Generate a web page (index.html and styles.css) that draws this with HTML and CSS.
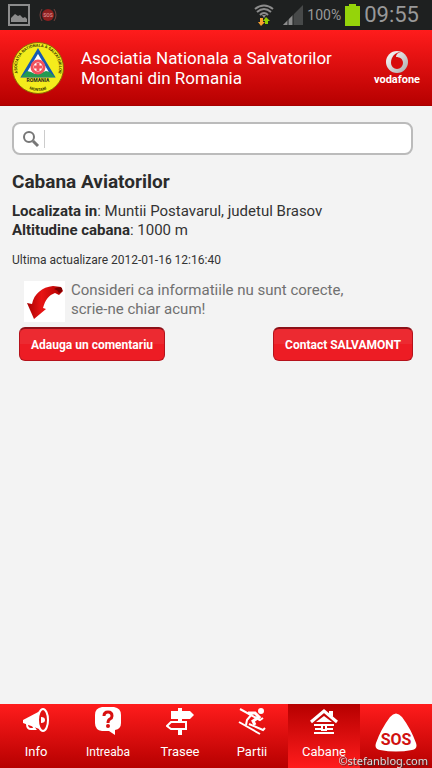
FILE: index.html
```html
<!DOCTYPE html>
<html lang="ro">
<head>
    <meta charset="UTF-8">
    <meta name="viewport" content="width=device-width, initial-scale=1.0">
    <title>Cabana Aviatorilor</title>
    <link rel="stylesheet" href="styles.css">
</head>
<body>
    <div class="status-bar">
        <svg class="status-picture" width="22" height="22" viewBox="0 0 22 22">
            <rect x="1" y="1" width="20" height="20" fill="none" stroke="#8c8c8c" stroke-width="2"/>
            <path d="M3 18v-4l4-4 3 2 2-1 3 3 2-1 2 2v3z" fill="#8c8c8c"/>
        </svg>
        <svg class="status-sos" width="18" height="16" viewBox="0 0 18 16">
            <circle cx="9" cy="8" r="6" fill="#8e1f1f"/>
            <path d="M3 2Q-1 8 3 14M15 2q4 6 0 12" fill="none" stroke="#70403c"/>
            <text x="9" y="10" text-anchor="middle" font-size="5" font-weight="700" fill="#d08080">SOS</text>
        </svg>
        <div class="status-right">
            <svg width="22" height="22" viewBox="0 0 22 22">
                <g fill="none" stroke="#8c8c8c" stroke-width="2">
                    <path d="M2 5q9-7 18 0M4 8q7-6 14 0M7 11q4-4 8 0"/>
                </g>
                <path d="M9 11h4l-2 3z" fill="#8c8c8c"/>
                <path d="M7 14h3v4h2l-4 4-3-4h2z" fill="#f9a02c"/>
                <path d="M12 20v-3h-2l3-4 4 4h-2v3z" fill="#8ed000"/>
            </svg>
            <svg width="20" height="20" viewBox="0 0 20 20">
                <path d="M20 0v20H0z" fill="#474949"/>
                <path d="M10 10v10H0z" fill="#8c8c8c"/>
                <path d="M5 14v6M10 8v12" stroke="#1e2020"/>
            </svg>
            <span class="percent">100%</span>
            <svg width="15" height="22" viewBox="0 0 15 22">
                <path d="M4 0h7v2h4v20H0V2h4z" fill="#95d40a"/>
            </svg>
            <span class="clock">09:55</span>
        </div>
    </div>

    <header class="header">
        <svg class="logo" viewBox="0 0 52 52">
            <defs>
                <path id="ring-top" d="M9 38A21 21 0 1 1 43 38"/>
                <path id="ring-bottom" d="M12 44Q26 54 40 44"/>
            </defs>
            <circle cx="26" cy="26" r="25.500" fill="#f4ec1c" stroke="#8c6a00"/>
            <text font-size="4" font-weight="700" fill="#3a3700"><textPath href="#ring-top" startOffset="50%" text-anchor="middle">ASOCIATIA NATIONALA A SALVATORILOR</textPath></text>
            <path d="M26 9L41 34H11z" fill="#fff" stroke="#1559b4" stroke-width="3"/>
            <path d="M9 35l6-6 4 1 4 2 6-1 5-2 4 1 5 5z" fill="#239a52"/>
            <circle cx="26" cy="25" r="6" fill="#fff" stroke="#f0525c" stroke-width="3"/>
            <path d="M26 21v8M22 25h8" stroke="#f0525c" stroke-width="3"/>
            <text x="26" y="40" text-anchor="middle" font-size="5" font-weight="700" fill="#222">ROMANIA</text>
            <text font-size="4" font-weight="700" fill="#3a3700"><textPath href="#ring-bottom" startOffset="50%" text-anchor="middle">MONTANI</textPath></text>
        </svg>
        <h1 class="title">Asociatia Nationala a Salvatorilor Montani din Romania</h1>
        <div class="vodafone">
            <svg width="24" height="24" viewBox="0 0 24 24">
                <defs>
                    <linearGradient id="silver" x2="1" y2="1">
                        <stop offset="0" stop-color="#fff"/>
                        <stop offset="1" stop-color="#a9a9a9"/>
                    </linearGradient>
                </defs>
                <circle cx="12" cy="12" r="11" fill="url(#silver)"/>
                <path d="M16 2q-5 1-5 5c4 0 7 2 7 6a6 6 0 0 1-12 0C6 7 10 2 16 2z" fill="#d80c0c"/>
            </svg>
            <span>vodafone</span>
        </div>
    </header>

    <main class="content">
        <form class="search">
            <svg width="18" height="18" viewBox="0 0 18 18" fill="none" stroke="#777">
                <circle cx="7" cy="7" r="5" stroke-width="2"/>
                <path d="M11 11l5 5" stroke-width="3"/>
            </svg>
            <input type="search" aria-label="Cauta">
        </form>

        <h2>Cabana Aviatorilor</h2>
        <p class="details">
            <strong>Localizata in</strong>: Muntii Postavarul, judetul Brasov<br>
            <strong>Altitudine cabana</strong>: 1000 m
        </p>
        <p class="updated">Ultima actualizare 2012-01-16 12:16:40</p>

        <div class="notice">
            <svg width="41" height="41" viewBox="0 0 41 41">
                <defs>
                    <linearGradient id="arrow" x2="1">
                        <stop offset="0" stop-color="#a80000"/>
                        <stop offset=".4" stop-color="#e81414"/>
                        <stop offset="1" stop-color="#b00000"/>
                    </linearGradient>
                </defs>
                <rect width="41" height="41" fill="#fff"/>
                <path d="M3 22l5 1C10 13 18 6 29 5l8 1 2 4-4 4-4-2c-6 2-10 7-12 15l3 1L10 38z" fill="url(#arrow)"/>
                <path d="M30 8q4-3 8-1 1 4-3 5-1-3-5-4z" fill="#7c0000"/>
            </svg>
            <p>Consideri ca informatiile nu sunt corecte,<br>scrie-ne chiar acum!</p>
        </div>
        <div class="actions">
            <button type="button">Adauga un comentariu</button>
            <button type="button">Contact SALVAMONT</button>
        </div>
    </main>

    <nav class="tabs">
        <a href="#info">
            <svg width="28" height="28" viewBox="0 0 28 28">
                <path d="M1 13L20 3v20L1 16z" fill="#fff"/>
                <ellipse cx="21" cy="13" rx="5" ry="11" fill="#e01313" stroke="#fff" stroke-width="2"/>
                <path d="M19 10q4 0 4 3t-4 3z" fill="#fff"/>
                <path d="M5 17q0 5 4 5h4l-2-3" fill="none" stroke="#fff" stroke-width="2"/>
            </svg>
            Info
        </a>
        <a href="#intreaba" class="small">
            <svg width="28" height="28" viewBox="0 0 28 28">
                <path d="M8 0h12q7 1 7 8v8q0 6-6 7v5l-6-4H8q-7-1-7-8V8q0-7 7-8z" fill="#fff"/>
                <path d="M10 9q0-4 4-4t4 4q0 2-2 3t-2 4" fill="none" stroke="#d81010" stroke-width="3"/>
                <circle cx="14" cy="19" r="2" fill="#d81010"/>
            </svg>
            Intreaba
        </a>
        <a href="#trasee">
            <svg width="28" height="28" viewBox="0 0 28 28">
                <path d="M12 1h4v3h8l4 4-4 4H5V4h7z" fill="#fff"/>
                <path d="M12 12h4v3h-4zM12 22h4v6h-4z" fill="#fff"/>
                <path d="M5 15h15v7H5l-4-3z" fill="none" stroke="#fff" stroke-width="2"/>
            </svg>
            Trasee
        </a>
        <a href="#partii">
            <svg width="28" height="28" viewBox="0 0 28 28" fill="none" stroke="#fff" stroke-width="2">
                <circle cx="23" cy="4" r="2" fill="#fff"/>
                <path d="M2 2l20 11M1 15l21 12M11 17l14 6 2-2"/>
                <path d="M10 6h7l4 4-6 4 2 4" stroke-width="3"/>
                <path d="M14 7l-5 6-1 5M18 10l4 3 3-2"/>
            </svg>
            Partii
        </a>
        <a href="#cabane" class="active">
            <svg width="28" height="28" viewBox="0 0 28 28">
                <path d="M1 15L14 4l13 11" fill="none" stroke="#fff" stroke-width="3"/>
                <path d="M6 15l8-6 8 6zM19 4h4v6l-4-3z" fill="#fff"/>
                <path d="M4 18h7M17 18h7M5 22h6M17 22h6M4 26h20M12 18h4v5h-4z" fill="none" stroke="#fff" stroke-width="2"/>
            </svg>
            Cabane
        </a>
        <a href="#sos" class="sos" aria-label="SOS">
            <svg width="42" height="40" viewBox="0 0 42 40">
                <path d="M15 4q6-7 12 0 9 12 14 26 2 6-4 7-16 3-32 0-6-1-4-7Q6 16 15 4z" fill="#fff"/>
                <text x="21" y="32" text-anchor="middle">SOS</text>
            </svg>
        </a>
    </nav>
    <div class="watermark">©stefanblog.com</div>
</body>
</html>
```
FILE: styles.css
```css
* {
    box-sizing: border-box;
}
body {
    margin: 0;
    min-height: 100vh;
    display: flex;
    flex-direction: column;
    font-family: Roboto, "Noto Sans", sans-serif;
    color: #333;
    background-color: #f3f3f3;
}
h1, h2, p {
    margin: 0;
}
svg {
    display: block;
    flex-shrink: 0;
}
.status-bar {
    height: 30px;
    display: flex;
    align-items: center;
    padding: 0 13px 0 8px;
    background-color: #1e2020;
    color: #999;
}
.status-sos {
    margin-left: 9px;
}
.status-right {
    display: flex;
    align-items: center;
    gap: 4px;
    margin-left: auto;
}
.status-right svg:first-child {
    margin-right: 4px;
}
.percent {
    font-size: 14px;
}
.clock {
    font-size: 22px;
    line-height: 30px;
}
.header {
    display: flex;
    align-items: center;
    height: 76px;
    padding: 0 12px;
    background: linear-gradient(#ff1c1c, #b60000);
    border-bottom: 1px solid #a80000;
    color: #fff;
}
.logo {
    width: 52px;
    height: 52px;
}
.title {
    flex: 1;
    margin: 0 24px 0 17px;
    font-size: 17px;
    font-weight: 400;
    line-height: 20px;
}
.vodafone {
    display: flex;
    flex-direction: column;
    align-items: center;
    font-size: 11px;
    font-weight: 700;
    line-height: 12px;
}
.content {
    flex: 1;
    padding: 16px 19px 16px 12px;
}
.search {
    display: flex;
    align-items: center;
    height: 33px;
    padding: 0 8px;
    background-color: #fff;
    border: 2px solid #bbb;
    border-radius: 8px;
}
.search input {
    flex: 1;
    min-width: 0;
    height: 18px;
    margin-left: 4px;
    border: 0;
    border-left: 1px solid #ccc;
    outline: none;
    background: none;
    font: inherit;
}
h2 {
    margin-top: 15px;
    font-size: 19px;
    line-height: 24px;
    color: #2b2b2b;
}
.details {
    margin-top: 8px;
    font-size: 15px;
    line-height: 19px;
}
.details strong {
    color: #2b2b2b;
}
.updated {
    margin-top: 12px;
    font-size: 12px;
    line-height: 16px;
}
.notice {
    display: flex;
    gap: 6px;
    margin: 13px 0 0 12px;
    font-size: 15px;
    line-height: 19px;
    color: #707070;
}
.actions {
    display: flex;
    justify-content: space-between;
    margin: 5px 0 0 7px;
}
.actions button {
    height: 34px;
    padding: 0 11px;
    border: 1px solid #b5121b;
    border-top: 2px solid #8c1118;
    border-radius: 6px;
    background: linear-gradient(#ec2a31 50%, #ed1c24 50%);
    color: #fff;
    font-family: inherit;
    font-size: 12px;
    font-weight: 700;
    cursor: pointer;
}
.tabs {
    display: grid;
    grid-template-columns: repeat(6, 1fr);
    height: 64px;
    background: linear-gradient(#ff1c1c, #b60000);
}
.tabs a {
    display: flex;
    flex-direction: column;
    align-items: center;
    gap: 4px;
    padding-top: 3px;
    color: #fff;
    font-size: 13px;
    line-height: 26px;
    text-decoration: none;
}
.tabs .small {
    font-size: 12px;
}
.tabs .active {
    background: linear-gradient(#b60000, #ff1c1c);
}
.tabs .sos {
    padding-top: 9px;
}
.sos text {
    fill: #d01010;
    font-family: Roboto, sans-serif;
    font-size: 16px;
    font-weight: 700;
}
.watermark {
    position: fixed;
    right: 4px;
    bottom: 0;
    font-family: "Noto Sans", sans-serif;
    font-size: 11px;
    line-height: 14px;
    color: #ddd;
    text-shadow: 1px 1px 1px #333;
}
```
